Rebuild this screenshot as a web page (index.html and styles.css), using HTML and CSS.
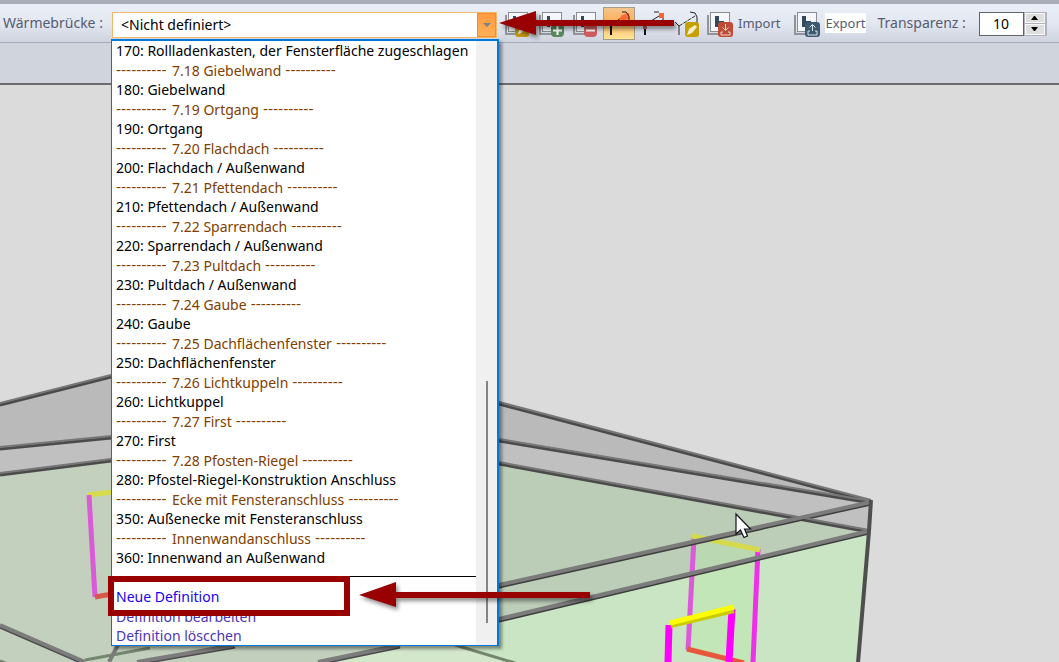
FILE: index.html
```html
<!DOCTYPE html>
<html lang="de">
<head>
<meta charset="utf-8">
<title>Wärmebrücken</title>
<link rel="stylesheet" href="styles.css">
</head>
<body>
<header class="toolbar">
  <label class="label combo-label" for="bridge">Wärmebrücke :</label>
  <div class="combo">
    <input class="combo-input" id="bridge" type="text" value="&lt;Nicht definiert&gt;">
    <button class="combo-toggle" type="button" aria-label="Liste öffnen"><svg width="8" height="4" viewBox="0 0 8 4"><path d="M0 0h8L4 4z" fill="#7d8086"/></svg></button>
    <div class="menu">
      <ul class="options">
        <li class="item">170: Rollladenkasten, der Fensterfläche zugeschlagen</li>
        <li class="group"><span class="dash">----------</span>7.18 Giebelwand<span class="dash">----------</span></li>
        <li class="item">180: Giebelwand</li>
        <li class="group"><span class="dash">----------</span>7.19 Ortgang<span class="dash">----------</span></li>
        <li class="item">190: Ortgang</li>
        <li class="group"><span class="dash">----------</span>7.20 Flachdach<span class="dash">----------</span></li>
        <li class="item">200: Flachdach / Außenwand</li>
        <li class="group"><span class="dash">----------</span>7.21 Pfettendach<span class="dash">----------</span></li>
        <li class="item">210: Pfettendach / Außenwand</li>
        <li class="group"><span class="dash">----------</span>7.22 Sparrendach<span class="dash">----------</span></li>
        <li class="item">220: Sparrendach / Außenwand</li>
        <li class="group"><span class="dash">----------</span>7.23 Pultdach<span class="dash">----------</span></li>
        <li class="item">230: Pultdach / Außenwand</li>
        <li class="group"><span class="dash">----------</span>7.24 Gaube<span class="dash">----------</span></li>
        <li class="item">240: Gaube</li>
        <li class="group"><span class="dash">----------</span>7.25 Dachflächenfenster<span class="dash">----------</span></li>
        <li class="item">250: Dachflächenfenster</li>
        <li class="group"><span class="dash">----------</span>7.26 Lichtkuppeln<span class="dash">----------</span></li>
        <li class="item">260: Lichtkuppel</li>
        <li class="group"><span class="dash">----------</span>7.27 First<span class="dash">----------</span></li>
        <li class="item">270: First</li>
        <li class="group"><span class="dash">----------</span>7.28 Pfosten-Riegel<span class="dash">----------</span></li>
        <li class="item">280: Pfostel-Riegel-Konstruktion Anschluss</li>
        <li class="group"><span class="dash">----------</span>Ecke mit Fensteranschluss<span class="dash">----------</span></li>
        <li class="item">350: Außenecke mit Fensteranschluss</li>
        <li class="group"><span class="dash">----------</span>Innenwandanschluss<span class="dash">----------</span></li>
        <li class="item">360: Innenwand an Außenwand</li>
        <li class="rule"></li>
        <li class="action action-new">Neue Definition</li>
        <li class="action">Definition bearbeiten</li>
        <li class="action">Definition löscchen</li>
      </ul>
      <div class="scrollbar"><div class="thumb"></div></div>
      <div class="frame"></div>
      <svg class="arrow arrow-new" width="240" height="32" viewBox="0 0 240 32"><path d="M0 13L37 0V10H231V16H37V25z" fill="#990000"/></svg>
    </div>
    <svg class="arrow arrow-toggle" width="184" height="32" viewBox="0 0 184 32"><path d="M0 12L37 0V9H175V15H37V24z" fill="#990000"/></svg>
  </div>

  <div class="tools">
    <button class="tool" type="button" aria-label="Bearbeiten">
      <svg width="32" height="33" viewBox="0 0 32 33"><path d="M5 8v19h16" fill="none" stroke="#929497" stroke-width="2"/><rect x="7.500" y="5.500" width="19" height="19" fill="#f4f6fa" stroke="#8b8e92"/><path d="M12 9h3v4h6v7h-3v-4h-3v4h-3z" fill="#33495c"/><rect x="14" y="17" width="14" height="13" rx="3" fill="#c79a0c"/><path d="M17 27l1-4 5-4 2 2-5 5z" fill="#fff"/></svg>
    </button>
    <button class="tool" type="button" aria-label="Hinzufügen">
      <svg width="32" height="33" viewBox="0 0 32 33"><path d="M5 8v19h16" fill="none" stroke="#929497" stroke-width="2"/><rect x="7.500" y="5.500" width="19" height="19" fill="#f4f6fa" stroke="#8b8e92"/><path d="M12 9h3v4h6v7h-3v-4h-3v4h-3z" fill="#33495c"/><rect x="16" y="17" width="13" height="13" rx="4" fill="#55895a"/><path d="M22.500 19v9M18 23.500h9" stroke="#fff" stroke-width="2"/></svg>
    </button>
    <button class="tool" type="button" aria-label="Entfernen">
      <svg width="32" height="33" viewBox="0 0 32 33"><path d="M5 8v19h16" fill="none" stroke="#929497" stroke-width="2"/><rect x="7.500" y="5.500" width="19" height="19" fill="#f4f6fa" stroke="#8b8e92"/><path d="M12 9h3v4h6v7h-3v-4h-3v4h-3z" fill="#33495c"/><rect x="15" y="17" width="13" height="13" rx="4" fill="#cf5c5f"/><path d="M17 23.500h9" stroke="#fff" stroke-width="2"/></svg>
    </button>
    <button class="tool tool-active" type="button" aria-label="Kante wählen">
      <svg width="32" height="33" viewBox="0 0 32 33"><path d="M8 16v12" stroke="#111" stroke-width="2"/><path d="M8 17L20 10" stroke="#222" stroke-dasharray="3 1"/><path d="M16 12l3-4 7-2v6l-7 2z" fill="#ff6a32"/><path d="M19 5h4l3 4v8" fill="none" stroke="#222"/></svg>
    </button>
    <button class="tool" type="button" aria-label="Punkt wählen">
      <svg width="32" height="33" viewBox="0 0 32 33"><path d="M8 18v10" stroke="#111" stroke-width="2"/><path d="M9 17L22 9M17 5h5M26 11v6" stroke="#222" fill="none"/><path d="M6 16h4v6H6z" fill="#a96060"/><path d="M22 6h5v5h-5z" fill="#ff6030"/></svg>
    </button>
    <button class="tool" type="button" aria-label="Kante bearbeiten">
      <svg width="32" height="33" viewBox="0 0 32 33"><path d="M4 15l4 4v9M19 5l5 1 2 4v6" stroke="#222" fill="none"/><path d="M8 19L24 9" stroke="#333" stroke-dasharray="4 1"/><rect x="14" y="15" width="14" height="15" rx="3" fill="#c6a000"/><path d="M16 28l2-6 6-4 2 2-5 6z" fill="#f4edcd"/></svg>
    </button>
  </div>
  <button class="tool-text" type="button">
    <svg width="28" height="33" viewBox="0 0 28 33"><path d="M3 8v19h14" fill="none" stroke="#929497" stroke-width="2"/><rect x="5.500" y="5.500" width="19" height="19" fill="#f4f6fa" stroke="#8b8e92"/><path d="M10 9h4v5h5v6h-9z" fill="#33495c"/><path d="M14 17h3v3h-3z" fill="#f4f6fa"/><rect x="13" y="15" width="15" height="15" rx="3" fill="#bd4d36"/><path d="M20.500 17v6M17.500 20.500l3 3 3-3M18 25h-2v3h9v-3h-2" fill="none" stroke="#f6d4cc"/></svg>
    <span class="label">Import</span>
  </button>
  <button class="tool-text" type="button">
    <svg width="28" height="33" viewBox="0 0 28 33"><path d="M3 8v19h14" fill="none" stroke="#929497" stroke-width="2"/><rect x="5.500" y="5.500" width="19" height="19" fill="#f4f6fa" stroke="#8b8e92"/><path d="M10 9h4v5h5v6h-9z" fill="#33495c"/><path d="M14 17h3v3h-3z" fill="#f4f6fa"/><rect x="13" y="15" width="15" height="15" rx="3" fill="#3c5b70"/><path d="M20.500 24v-6M17.500 20.500l3-3 3 3M18 24h-2v4h9v-4h-2" fill="none" stroke="#d8e4ec"/></svg>
    <span class="label label-lit">Export</span>
  </button>
  <label class="label opacity-label" for="opacity">Transparenz :</label>
  <div class="spinner">
    <input class="spinner-input" id="opacity" type="text" value="10">
    <div class="spinner-buttons">
      <button class="step" type="button" aria-label="Mehr"><svg width="7" height="4" viewBox="0 0 7 4"><path d="M0 4L3 0h1l3 4z"/></svg></button>
      <button class="step" type="button" aria-label="Weniger"><svg width="7" height="4" viewBox="0 0 7 4"><path d="M0 0h7L4 4H3z"/></svg></button>
    </div>
  </div>
</header>
<div class="band"></div>
<main class="view">
  <svg class="scene" viewBox="0 85 1059 577" preserveAspectRatio="xMinYMin slice">
    <path d="M0 404L111 376L300 350L499 403L871 501L869 531L858 662H0z" fill="#bababa"/>
    <path d="M0 448L111 437L499 440L871 502V531L0 474z" fill="#c1c0c0"/>
    <path d="M0 474L111 460V662H0z" fill="#c3d0be"/>
    <path d="M111 460L499 463L800 518L499 585V662H111z" fill="#bccdb7"/>
    <path d="M499 585L800 518L869 531L499 619z" fill="#bccdb8"/>
    <path d="M499 619L869 531L858 662H318L400 645z" fill="#cae5c3"/>
    <path d="M111 640H400L318 662H111z" fill="#c2cfbd"/>
    <path d="M318 662L400 645H455L510 662z" fill="#d3e7cb"/>
    <path d="M694 538L758 550L753 662H742L688 650z" fill="#b7e6a8" opacity=".45"/>
    <g class="edge-shade">
      <path d="M0 405L111 377M0 449L111 438M0 475L111 461M0 627L85 664M499 404L871 502M499 441L871 503M499 464L869 532M137 664L235 647M318 664L400 647"/>
    </g>
    <g class="edge-thin">
      <path d="M85 660L150 648M455 645L515 663M0 661l8 3"/>
    </g>
    <path class="back" d="M694 538L688 650" stroke="#db5ad8"/>
    <path class="back" d="M758 549L753 662" stroke="#ee31e8"/>
    <path class="back" d="M692 536L760 550" stroke="#d4da4a"/>
    <path class="back" d="M687 649L744 663" stroke="#e8573c"/>
    <g class="edge-under"><path d="M499 587L871 504M499 621L869 533"/></g>
    <g class="edge">
      <path d="M0 403L111 375M0 447L111 436M0 473L111 459M499 402L871 500M499 439L871 501M499 462L869 530"/>
    </g>
    <g class="edge-front"><path d="M499 585L871 502M499 619L869 531M0 625L85 662M118 645L109 662M137 662L235 645M318 662L400 645"/></g>
    <path d="M871 500L869 531L858 663" fill="none" stroke="#4e4e4e" stroke-width="4"/>
    <path class="back" d="M88 495L112 492" stroke="#d7dc4a"/>
    <path class="back" d="M89 495L95 597" stroke="#d95bd6"/>
    <path class="back" d="M95 597L112 594" stroke="#d7594c"/>
    <path d="M669 625L668 662M732 609L729 662" stroke="#f0f" stroke-width="7"/>
    <path d="M671 626L734 611" stroke="#cccb00" stroke-width="4"/>
    <path d="M670 623L734 607" stroke="#ff0" stroke-width="5"/>
    <path d="M736 514V534L740.500 530L744 537.500L747.500 536L744.500 529H750.500z" fill="#fff" stroke="#14141c" stroke-width="1.200"/>
  </svg>
</main>
</body>
</html>
```
FILE: styles.css
```css
* { box-sizing: border-box; }

body {
  display: flex;
  flex-direction: column;
  height: 100vh;
  margin: 0;
  overflow: hidden;
  background: #dbdbdb;
  font: 14px/20px "Noto Sans", "Open Sans", sans-serif;
}

button, input { font: inherit; }

button {
  display: flex;
  align-items: center;
  justify-content: center;
  padding: 0;
  border: 0;
  background: none;
}

.toolbar {
  display: flex;
  flex: none;
  align-items: center;
  height: 43px;
  padding-left: 3px;
  border-top: 4px solid #a9adb8;
  border-bottom: 1px solid #a6abb7;
  background: linear-gradient(#ebeff8, #e2e7f1 50%, #cfd3de);
}

.label {
  color: #565c70;
  white-space: nowrap;
}

.label-lit { background: #fff; }
.combo-label { width: 109px; }
.opacity-label { width: 101px; }

.combo {
  position: relative;
  z-index: 2;
  display: flex;
  flex: none;
  width: 385px;
  height: 26px;
  margin-top: 3px;
  border: 1px solid #f5b868;
  background: #fff;
}

.combo-input {
  flex: 1;
  min-width: 0;
  padding: 0 8px;
  border: 0;
  background: #fff;
  color: #000;
}

.combo-toggle {
  width: 19px;
  border: 1px solid #f58a2e;
  background: linear-gradient(#ff9a42, #ffb057);
}

.menu {
  position: absolute;
  top: 26px;
  left: -2px;
  display: flex;
  width: 388px;
  border: solid #0078d7;
  border-width: 2px 2px 1px 1px;
  background: #fff;
  box-shadow: 3px 3px 3px rgba(0, 0, 0, .4);
}

.options {
  flex: 1;
  margin: 0;
  padding: 0;
  list-style: none;
  white-space: nowrap;
}

.item, .group, .action { padding-left: 4px; }
.item { height: 20px; color: #000; }

.group {
  display: flex;
  gap: 4px;
  height: 19px;
  line-height: 19px;
  color: #804000;
}

.dash {
  width: 52px;
  font-family: "DejaVu Sans", sans-serif;
}

.rule {
  height: 19px;
  background: linear-gradient(#000, #000) 0 8px / 100% 1px no-repeat;
}

.action {
  height: 19px;
  line-height: 19px;
  color: #4c35b8;
}

.action-new {
  height: 20px;
  line-height: 20px;
  color: #1c00f0;
}

.scrollbar {
  display: flex;
  justify-content: center;
  width: 21px;
  background: #f0f0f0;
}

.thumb {
  width: 2px;
  margin: 340px 0 22px;
  background: #858585;
}

.frame {
  position: absolute;
  bottom: 29px;
  left: -4px;
  width: 242px;
  height: 40px;
  border: 6px solid #990000;
}

.arrow {
  position: absolute;
  filter: drop-shadow(2px 3px 2px rgba(0, 0, 0, .45));
}

.arrow-toggle { top: -2px; left: 386px; }
.arrow-new { bottom: 31px; left: 247px; }

.tools {
  display: flex;
  gap: 2px;
  margin: 0 2px 0 4px;
}

.tool {
  width: 32px;
  height: 33px;
}

.tool-active {
  outline: 1px solid #a69b86;
  outline-offset: -1px;
  background: linear-gradient(#f3c592, #fcb35c 40%, #ffe79a);
}

.tool-text {
  gap: 5px;
  margin-right: 12px;
  font-size: 13px;
}

.spinner {
  display: flex;
  width: 68px;
  height: 24px;
  margin-top: 1px;
}

.spinner-input {
  width: 45px;
  padding: 0;
  border: 1px solid #62646a;
  background: #fff;
  text-align: center;
}

.spinner-buttons {
  display: flex;
  flex: 1;
  flex-direction: column;
  gap: 1px;
  padding: 1px 2px 1px 1px;
  background: #b0b3bb;
}

.step {
  flex: 1;
  border: 1px solid #f8f8f8;
  background: #dedede;
}

.band {
  flex: none;
  height: 42px;
  border-bottom: 2px solid #6c6c6e;
  background: #d0d4dd;
}

.view {
  flex: 1;
  min-height: 0;
}

.scene {
  display: block;
  width: 100%;
  height: 100%;
}

.edge { fill: none; stroke: #777; stroke-width: 2; }
.edge-shade { fill: none; stroke: #4b4b4b; stroke-width: 3; }
.edge-front { fill: none; stroke: #7c7c7c; stroke-width: 4; }
.edge-under { fill: none; stroke: #3c3c3c; stroke-width: 3; }
.edge-thin { fill: none; stroke: #75866f; stroke-width: 3; }
.back { fill: none; stroke-width: 5; }
```
